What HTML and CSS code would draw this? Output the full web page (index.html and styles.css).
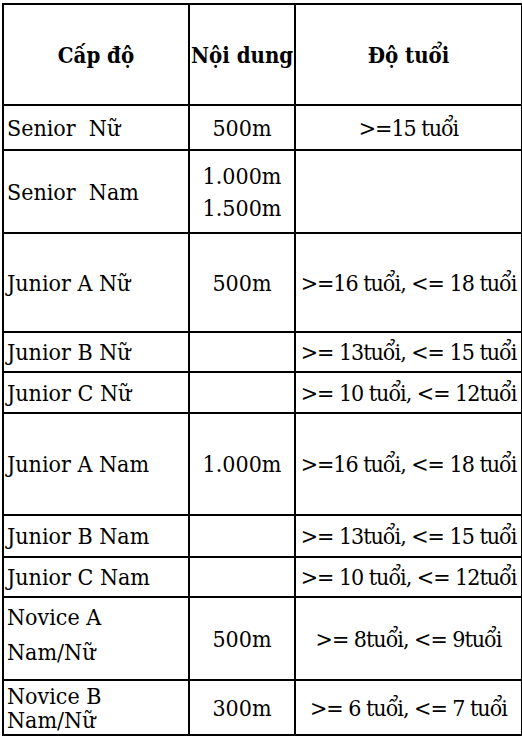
FILE: index.html
```html
<!DOCTYPE html>
<html lang="vi">
<head>
<meta charset="utf-8">
<title>Cấp độ</title>
<link rel="stylesheet" href="styles.css">
</head>
<body>
<table class="age-table">
  <colgroup>
    <col class="c1">
    <col class="c2">
    <col class="c3">
  </colgroup>
  <thead>
    <tr class="r-head">
      <th>Cấp độ</th>
      <th>Nội dung</th>
      <th>Độ tuổi</th>
    </tr>
  </thead>
  <tbody>
    <tr class="r45">
      <td class="lvl">Senior&nbsp; Nữ</td>
      <td>500m</td>
      <td class="age">&gt;=15 tuổi</td>
    </tr>
    <tr class="r83">
      <td class="lvl">Senior&nbsp; Nam</td>
      <td class="two">1.000m<br>1.500m</td>
      <td class="age"></td>
    </tr>
    <tr class="r99">
      <td class="lvl">Junior A Nữ</td>
      <td>500m</td>
      <td class="age">&gt;=16 tuổi, &lt;= 18 tuổi</td>
    </tr>
    <tr class="r40">
      <td class="lvl">Junior B Nữ</td>
      <td></td>
      <td class="age">&gt;= 13tuổi, &lt;= 15 tuổi</td>
    </tr>
    <tr class="r41">
      <td class="lvl">Junior C Nữ</td>
      <td></td>
      <td class="age">&gt;= 10 tuổi, &lt;= 12tuổi</td>
    </tr>
    <tr class="r102">
      <td class="lvl">Junior A Nam</td>
      <td>1.000m</td>
      <td class="age">&gt;=16 tuổi, &lt;= 18 tuổi</td>
    </tr>
    <tr class="r42">
      <td class="lvl">Junior B Nam</td>
      <td></td>
      <td class="age">&gt;= 13tuổi, &lt;= 15 tuổi</td>
    </tr>
    <tr class="r40">
      <td class="lvl">Junior C Nam</td>
      <td></td>
      <td class="age">&gt;= 10 tuổi, &lt;= 12tuổi</td>
    </tr>
    <tr class="r83">
      <td class="lvl two-a">Novice A<br>Nam/Nữ</td>
      <td>500m</td>
      <td class="age">&gt;= 8tuổi, &lt;= 9tuổi</td>
    </tr>
    <tr class="r55">
      <td class="lvl two-b">Novice B<br>Nam/Nữ</td>
      <td>300m</td>
      <td class="age">&gt;= 6 tuổi, &lt;= 7 tuổi</td>
    </tr>
  </tbody>
</table>
</body>
</html>
```

FILE: styles.css
```css
html, body {
  margin: 0;
  padding: 0;
  background: #ffffff;
}

body {
  padding: 3px 0 0 2px;
  font-family: "DejaVu Serif Condensed", "DejaVu Serif", serif;
  font-stretch: condensed;
  color: #000;
}

.age-table {
  border-collapse: collapse;
  table-layout: fixed;
  width: 519px;
  font-size: 23px;
  line-height: 28px;
}

.c1 { width: 186px; }
.c2 { width: 106px; }
.c3 { width: 227px; }

.age-table th,
.age-table td {
  border: 2px solid #000;
  padding: 0 1px;
  text-align: center;
  vertical-align: middle;
  white-space: nowrap;
  font-family: "DejaVu Serif Condensed", "DejaVu Serif", serif;
  font-stretch: condensed;
}

.age-table th {
  font-weight: bold;
  font-size: 22px;
}

.age-table td.lvl {
  text-align: left;
  padding-left: 3px;
}

.age-table td.age {
  letter-spacing: -1px;
}

.age-table td.two {
  line-height: 32px;
}

.age-table td.two-a {
  line-height: 35px;
  padding-bottom: 8px;
}

.age-table td.two-b {
  line-height: 24px;
}

.r-head { height: 101px; }
.r45 { height: 45px; }
.r83 { height: 83px; }
.r99 { height: 99px; }
.r40 { height: 40px; }
.r41 { height: 41px; }
.r102 { height: 102px; }
.r42 { height: 42px; }
.r55 { height: 55px; }
```
